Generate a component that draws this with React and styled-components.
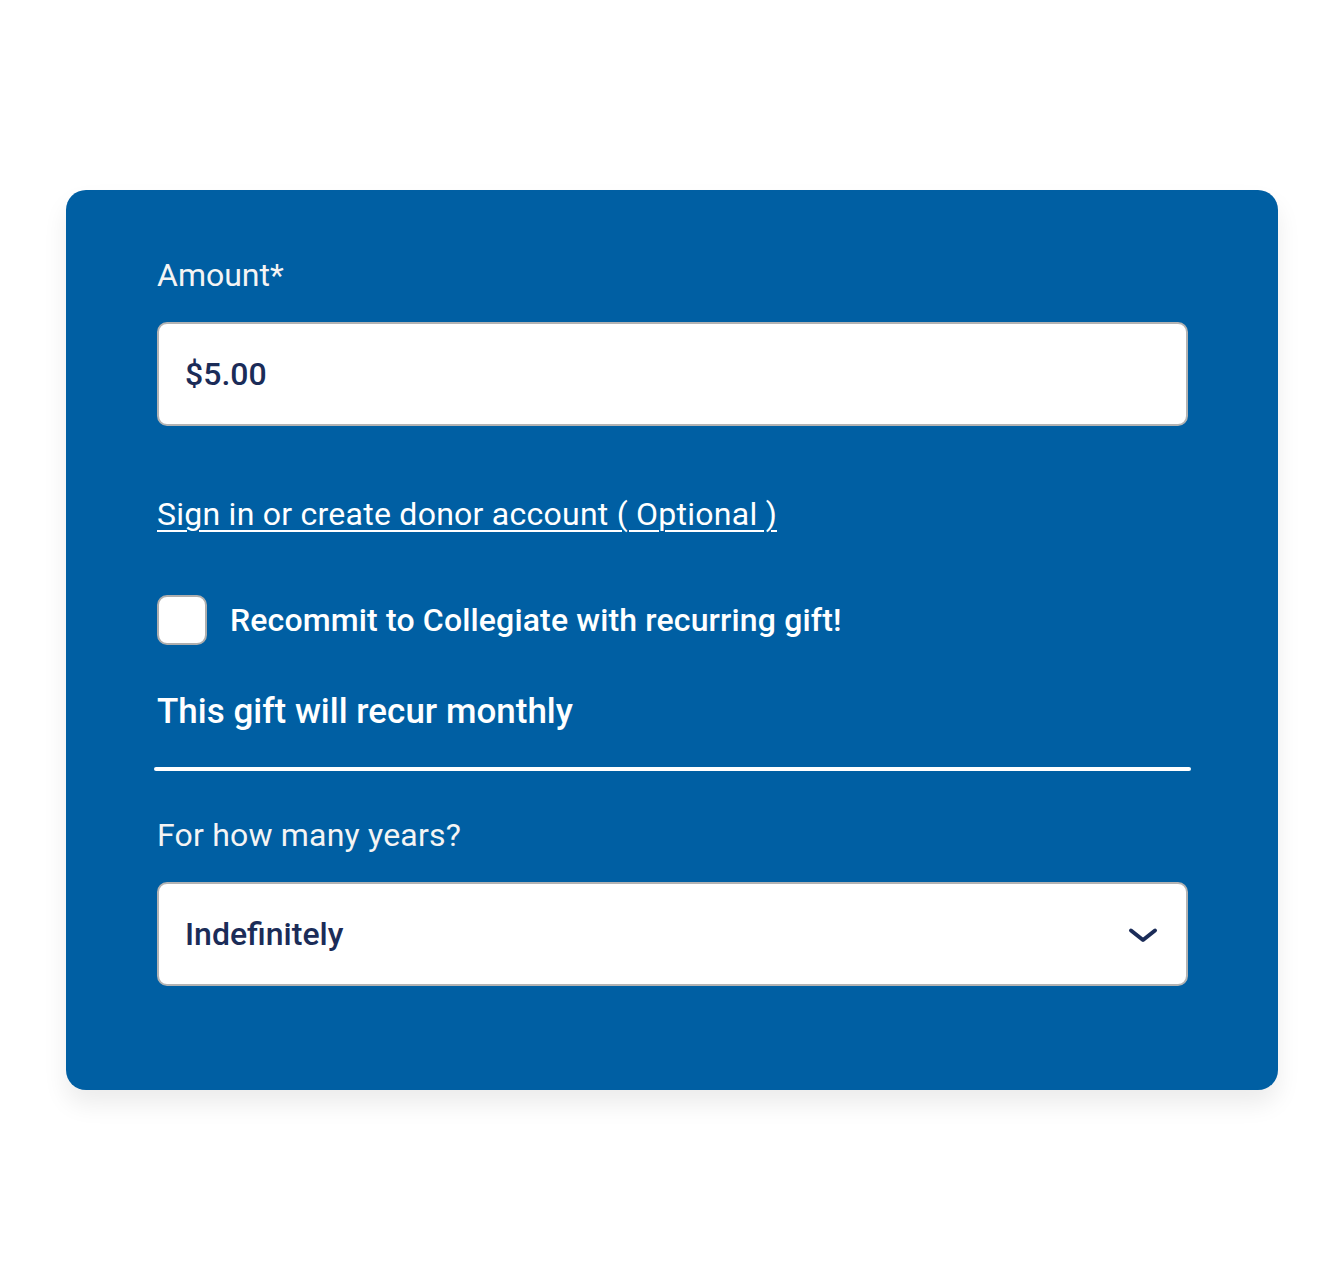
import React from "react";
import styled, { createGlobalStyle } from "styled-components";

const Global = createGlobalStyle`
  html, body { margin: 0; padding: 0; background: #ffffff; }
  body { font-family: Roboto, "Noto Sans", "Liberation Sans", sans-serif; }
  * { box-sizing: border-box; }
`;

const Page = styled.div`
  width: 1344px;
  height: 1286px;
  padding: 190px 66px 0 66px;
`;

const Card = styled.form`
  width: 1212px;
  height: 900px;
  background: #005fa3;
  border-radius: 20px;
  box-shadow: 0 14px 24px rgba(0, 0, 0, 0.08);
  padding: 66px 90px 0 91px;
  display: flex;
  flex-direction: column;
  color: #ffffff;
`;

const Label = styled.label`
  font-size: 32px;
  font-weight: 400;
  line-height: 38px;
  color: #f4f4f4;
  letter-spacing: ${(p) => p.$spacing || 0}px;
  margin: ${(p) => p.$margin || "0"};
  display: block;
`;

const Field = styled.div`
  height: 104px;
  margin-top: 28px;
  background: #ffffff;
  border: 2px solid #b3b3b3;
  border-radius: 10px;
  display: flex;
  align-items: center;
  justify-content: space-between;
  padding: 0 28px 0 26px;
  color: #1b2c58;
  font-size: 32px;
  font-weight: 500;
`;

const Link = styled.a`
  color: #ffffff;
  font-size: 32px;
  font-weight: 400;
  line-height: 38px;
  letter-spacing: 0.25px;
  text-decoration: underline;
  text-decoration-thickness: 2px;
  text-underline-offset: 5px;
  margin-top: 69px;
  align-self: flex-start;
`;

const CheckRow = styled.div`
  display: flex;
  align-items: center;
  gap: 23px;
  margin-top: 62px;
  font-size: 32px;
  font-weight: 500;
  letter-spacing: 0.15px;
`;

const Box = styled.span`
  width: 50px;
  height: 50px;
  border-radius: 10px;
  background: #ffffff;
  border: 2px solid #aeaeae;
  flex: none;
`;

const Heading = styled.div`
  font-size: 35px;
  font-weight: 500;
  line-height: 42px;
  margin-top: 46px;
`;

const Divider = styled.div`
  height: 4px;
  background: #ffffff;
  border-radius: 2px;
  margin: 34px -3px 0 -3px;
`;

const Chevron = () => (
  <svg width="30" height="22" viewBox="0 0 30 22">
    <path
      d="M3 7.5 L15 17 L27 7.5"
      fill="none"
      stroke="#1b2c58"
      strokeWidth="4"
      strokeLinecap="round"
      strokeLinejoin="round"
    />
  </svg>
);

export default function App() {
  return (
    <>
      <Global />
      <Page>
        <Card>
          <Label>Amount*</Label>
          <Field>$5.00</Field>
          <Link href="#">Sign in or create donor account ( Optional )</Link>
          <CheckRow>
            <Box />
            <span>Recommit to Collegiate with recurring gift!</span>
          </CheckRow>
          <Heading>This gift will recur monthly</Heading>
          <Divider />
          <Label $margin="45px 0 0 0" $spacing={0.2}>For how many years?</Label>
          <Field>
            <span>Indefinitely</span>
            <Chevron />
          </Field>
        </Card>
      </Page>
    </>
  );
}
